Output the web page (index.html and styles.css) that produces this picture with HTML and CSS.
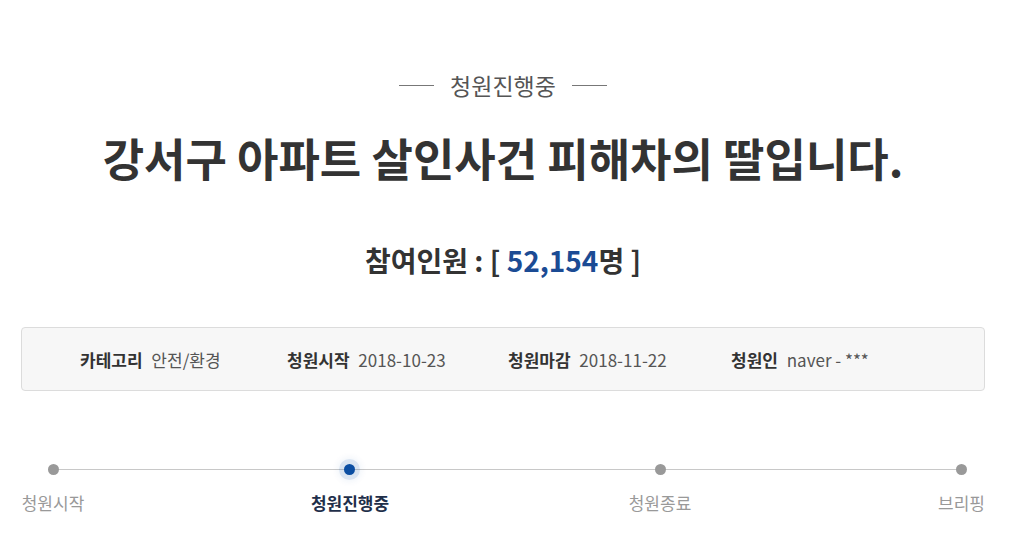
FILE: index.html
```html
<!DOCTYPE html>
<html>

<head>
    <title>청원진행중</title>
    <link rel="stylesheet" href="styles.css">
</head>

<body>
    <div class="petition">
        <div class="petition-status">
            <span class="dash"></span>
            <span>청원진행중</span>
            <span class="dash"></span>
        </div>
        <h1 class="petition-title">강서구 아파트 살인사건 피해차의 딸입니다.</h1>
        <h2 class="petition-count">참여인원 : [ <span class="count-num">52,154</span>명 ]</h2>

        <ul class="petition-info">
            <li><strong>카테고리</strong> 안전/환경</li>
            <li><strong>청원시작</strong> 2018-10-23</li>
            <li><strong>청원마감</strong> 2018-11-22</li>
            <li><strong>청원인</strong> naver - ***</li>
        </ul>

        <ol class="progress">
            <li class="step"><span class="dot"></span><span class="label">청원시작</span></li>
            <li class="step active"><span class="dot"></span><span class="label">청원진행중</span></li>
            <li class="step"><span class="dot"></span><span class="label">청원종료</span></li>
            <li class="step"><span class="dot"></span><span class="label">브리핑</span></li>
        </ol>
    </div>
</body>

</html>
```

FILE: styles.css
```css
/* General Styles */
* {
    box-sizing: border-box;
}

html {
    background-color: #fff;
}

body {
    margin: 0;
    color: #333;
    font-family: "Noto Sans CJK KR", "Noto Sans", sans-serif;
}

/* Petition header */
.petition {
    width: 964px;
    margin-left: 21px;
    padding-top: 66px;
}

.petition-status {
    display: flex;
    justify-content: center;
    align-items: center;
    gap: 16px;
    font-size: 23px;
    line-height: 38px;
    color: #555;
}

.petition-status .dash {
    width: 35px;
    height: 1px;
    background: #777;
}

.petition-title {
    margin: 24px 0 0 0;
    text-align: center;
    font-size: 45px;
    line-height: 60px;
    font-weight: bold;
    color: #333;
}

.petition-count {
    margin: 49px 0 0 0;
    text-align: center;
    font-size: 28px;
    line-height: 46px;
    font-weight: bold;
    color: #333;
}

.petition-count .count-num {
    color: #1b4b94;
}

/* Info box */
.petition-info {
    list-style: none;
    display: flex;
    margin: 44px 0 0 0;
    padding: 0 0 0 58px;
    height: 64px;
    align-items: center;
    background-color: #f7f7f7;
    border: 1px solid #dcdcdc;
    border-radius: 4px;
    font-size: 17px;
    color: #555;
}

.petition-info li {
    white-space: nowrap;
}

.petition-info li:nth-child(1) { width: 207px; }
.petition-info li:nth-child(2) { width: 221px; }
.petition-info li:nth-child(3) { width: 223px; }

.petition-info strong {
    color: #333;
    margin-right: 5px;
}

/* Progress steps */
.progress {
    position: relative;
    list-style: none;
    margin: 72px 0 0 0;
    padding: 0;
    display: grid;
    grid-template-columns: 64px 530px 90px 1fr;
}

.progress::before {
    content: "";
    position: absolute;
    left: 32px;
    right: 24px;
    top: 6px;
    height: 1px;
    background: #c8c8c8;
}

.step {
    display: flex;
    flex-direction: column;
    align-items: center;
    justify-self: center;
}

.step:last-child {
    justify-self: end;
}

.dot {
    position: relative;
    width: 11px;
    height: 11px;
    border-radius: 50%;
    background: #999;
    margin-top: 1px;
}

.step.active .dot {
    background: #0b4ea2;
    box-shadow: 0 0 0 5px rgba(11, 78, 162, 0.1), 0 0 6px 7px rgba(11, 78, 162, 0.06);
}

.label {
    margin-top: 16px;
    font-size: 17px;
    line-height: 24px;
    color: #999;
}

.step.active .label {
    color: #1f2f4a;
    font-weight: bold;
}
```
